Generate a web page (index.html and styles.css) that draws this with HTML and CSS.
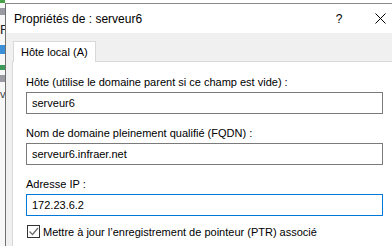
FILE: index.html
```html
<!DOCTYPE html>
<html lang="fr">
<head>
    <meta charset="UTF-8">
    <title>Propriétés de : serveur6</title>
    <link rel="stylesheet" href="styles.css">
</head>
<body>
<div class="screen">
    <div class="app-strip">
        <span class="ico ico-green"></span>
        <span class="ico ico-srv"></span>
        <span class="strip-letter">F</span>
        <span class="ico ico-arrow"></span>
        <span class="ico ico-globe"></span>
        <span class="ico ico-srv"></span>
        <span class="strip-chev">v</span>
    </div>
    <div class="dialog">
        <div class="titlebar">
            <span class="title">Propriétés de : serveur6</span>
            <span class="help">?</span>
            <span class="close">
                <svg width="11" height="11" viewBox="0 0 11 11"><path d="M0.5 0.5L10.5 10.5M10.5 0.5L0.5 10.5" stroke="#000" stroke-width="1" fill="none"/></svg>
            </span>
        </div>
        <div class="body">
            <div class="tabs">
                <div class="tab">Hôte local (A)</div>
            </div>
            <div class="panel">
                <div class="field">
                    <label class="lbl">Hôte (utilise le domaine parent si ce champ est vide) :</label>
                    <div class="box">serveur6</div>
                </div>
                <div class="field">
                    <label class="lbl">Nom de domaine pleinement qualifié (FQDN) :</label>
                    <div class="box">serveur6.infraer.net</div>
                </div>
                <div class="field">
                    <label class="lbl">Adresse IP :</label>
                    <div class="box focus">172.23.6.2</div>
                </div>
                <div class="check">
                    <span class="cb">
                        <svg width="11" height="11" viewBox="0 0 11 11"><path d="M1.5 5.5L4.5 8.5L10 2" stroke="#6d6d6d" stroke-width="1.3" fill="none"/></svg>
                    </span>
                    <span>Mettre à jour l’enregistrement de pointeur (PTR) associé</span>
                </div>
            </div>
        </div>
    </div>
</div>
</body>
</html>
```

FILE: styles.css
```css
*{
    margin:0;padding:0;
    box-sizing: border-box;
}
body{
    width:392px;
    height:246px;
    overflow:hidden;
    background:#fff;
    font-family:"Liberation Sans", Arial, sans-serif;
    font-size:11px;
    color:#000;
}
.screen{
    display:flex;
    height:246px;
}
.app-strip{
    width:5px;
    flex:none;
    display:flex;
    flex-direction:column;
    overflow:hidden;
    background:#f7f7f7;
}
.ico{
    display:block;
    width:5px;
    flex:none;
}
.ico-green{height:3px;background:#4aa04a;}
.ico-srv{height:7px;margin-top:5px;background:#9a9aa2;}
.ico-arrow{height:9px;margin-top:9px;background:#3a8fd8;}
.ico-globe{height:5px;margin-top:11px;background:#3b9a5a;}
.strip-letter{
    display:block;
    width:5px;
    overflow:hidden;
    font-size:13px;
    line-height:13px;
    margin-top:8px;
    color:#222;
}
.strip-chev{
    display:block;
    width:5px;
    overflow:hidden;
    font-size:11px;
    line-height:10px;
    margin-top:7px;
    color:#444;
}
.dialog{
    flex:1;
    min-width:0;
    margin-top:3px;
    border-left:1px solid #707070;
    border-top:1px solid #8a8a8a;
    display:flex;
    flex-direction:column;
    overflow:hidden;
}
.titlebar{
    flex:none;
    height:29px;
    background:#fff;
    display:flex;
    align-items:center;
    padding-left:8px;
    font-size:12px;
}
.title{
    flex:1;
}
.help{
    width:24px;
    margin-right:17px;
    text-align:center;
    font-size:12px;
}
.close{
    width:24px;
    display:flex;
    justify-content:center;
}
.body{
    flex:1;
    min-height:0;
    background:#f0f0f0;
    padding:8px 0 0 6px;
}
.tabs{
    display:flex;
    margin-left:1px;
    position:relative;
    z-index:1;
    margin-bottom:-1px;
}
.tab{
    height:21px;
    padding:0 7px;
    white-space:nowrap;
    background:#fff;
    border:1px solid #d9d9d9;
    border-bottom:none;
    line-height:20px;
}
.panel{
    background:#fff;
    border-top:1px solid #d9d9d9;
    border-left:1px solid #d9d9d9;
    height:200px;
    padding:13px 9px 0 13px;
}
.field{
    margin-bottom:12px;
}
.lbl{
    display:block;
    line-height:15px;
    margin-bottom:2px;
    white-space:nowrap;
}
.box{
    height:22px;
    border:1px solid #7a7a7a;
    padding-left:5px;
    line-height:20px;
}
.box.focus{
    border-color:#0078d7;
}
.check{
    display:flex;
    align-items:center;
    margin-top:-3px;
    margin-left:1px;
    gap:3px;
    white-space:nowrap;
}
.cb{
    width:13px;
    height:13px;
    flex:none;
    border:1px solid #333;
    display:flex;
    align-items:center;
    justify-content:center;
}
```
